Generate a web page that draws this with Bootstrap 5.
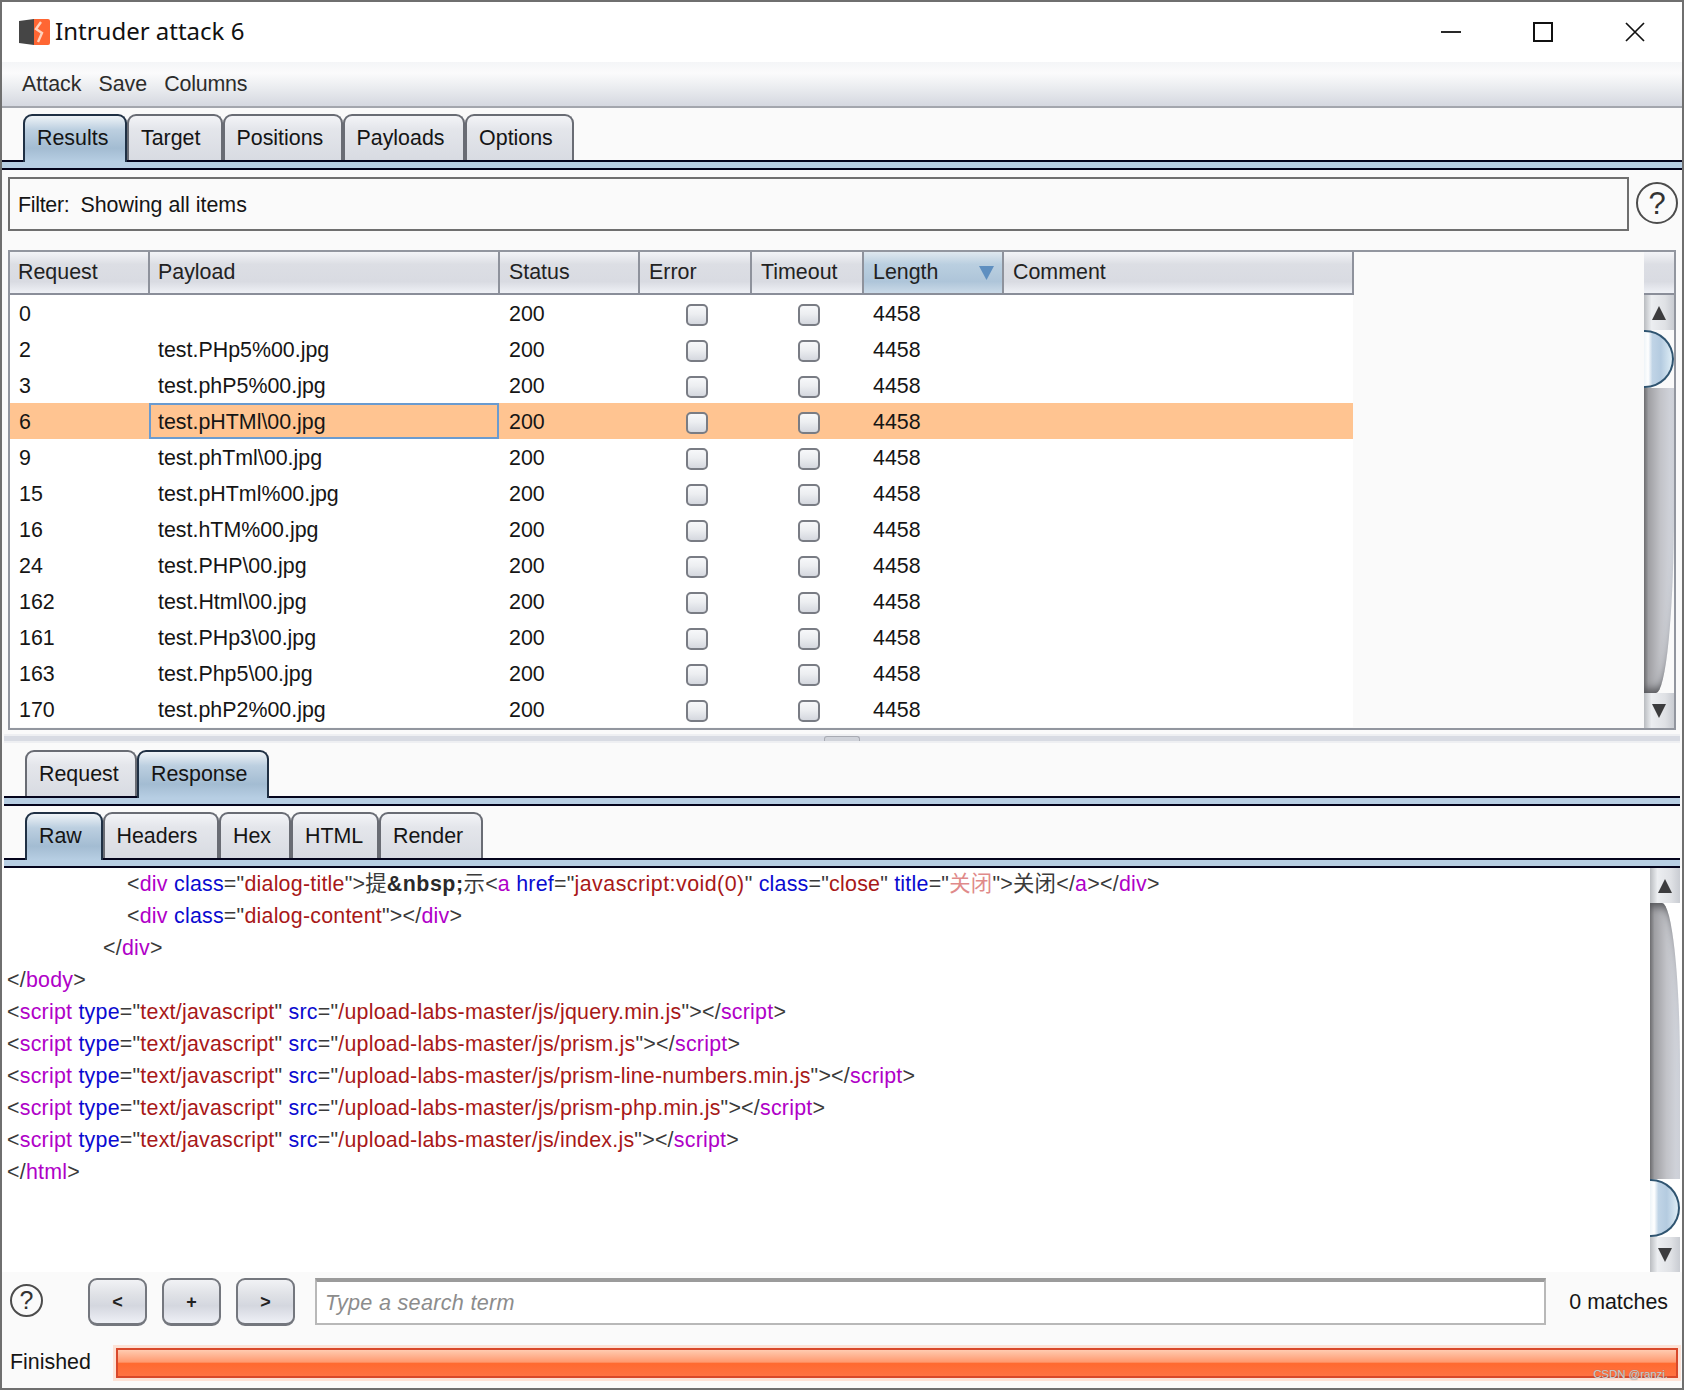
<!DOCTYPE html>
<html lang="en">
<head>
<meta charset="utf-8">
<title>Intruder attack 6</title>
<link href="https://cdn.jsdelivr.net/npm/bootstrap@5.3.0/dist/css/bootstrap.min.css" rel="stylesheet">
<style>
html,body{height:1390px;overflow:hidden;background:#fafafa}
body{font-family:"Liberation Sans",Arial,"Noto Sans CJK SC",sans-serif;font-size:21.4px;color:#151515;line-height:1.2}
.win{height:1390px;border:2px solid #6f6f6f;background:#fafafa;position:relative}
.titlebar{height:60px;background:#fff}
.app-logo{margin-left:16px;width:32px;height:28px}
.app-title{font-family:"Noto Sans","Liberation Sans",sans-serif;font-size:24px;color:#111;margin-left:5px;padding-bottom:2px}
.winctl-set{margin-right:1px}
.winctl{width:92px;height:60px}
.menubar{height:46px;padding:2px 0 0 20px;gap:17px;background:linear-gradient(#f4f5f7 0,#fbfbfc 25%,#eceef1 55%,#d5d8e0 100%);border-bottom:2px solid #a3a6ad;color:#2c2c2c}
.menu-last{letter-spacing:-.2px}
.tabset{height:46px;border:0;flex-wrap:nowrap}
.tabset-top{margin-top:6px;padding-left:21px}
.tabset-a{margin-top:7px;padding-left:23px}
.tabset-b{margin-top:6px;padding-left:23px}
.tabset .nav-link{height:46px;padding:8px 0 0 12px;margin:0;color:#151515;font-size:21.4px;line-height:28px;
 border:2px solid #696c74;border-bottom:0;border-radius:9px 9px 0 0;background:linear-gradient(#f3f4f7 0,#e4e6eb 30%,#d8dbe2 100%)}
.tabset .nav-link.active{position:relative;z-index:2;height:48px;margin-bottom:-2px;color:#151515;border-color:#1f3044;
 background:linear-gradient(#eef3f7 0,#bccfe0 30%,#a3bcd2 70%,#b7cee3 100%)}
.tw-104{width:104px}.tw-95{width:95.5px}.tw-120{width:120px}.tw-123{width:122.6px}.tw-108{width:108.5px}
.tw-112{width:112px}.tw-132{width:132px}.tw-78{width:77.5px}.tw-116{width:116.5px}.tw-72{width:72px}.tw-88{width:88px}
.strip{height:10px;border-top:2px solid #04041c;border-bottom:2px solid #04041c;background:#b7cee3}
.pane-in{margin-left:2px;margin-right:2px}
.filter-row{margin-top:7px;padding:0 4px 0 6px;gap:7px;height:54px}
.filter-box{height:54px;border:2px solid #6f6f6f;background:#fafafa;padding:3px 0 0 8px}
.filter-lbl{margin-right:11px;letter-spacing:-.3px}
.helpq{border:2px solid #4c4c4c;border-radius:50%;font-family:"Liberation Sans",sans-serif;color:#333;font-weight:400;line-height:1}
.helpq-l{width:42px;height:42px;font-size:31px;margin-bottom:2px}
.helpq-s{width:33px;height:33px;font-size:25px;margin-top:6px}
.frame{margin:19px 6px 0 6px;height:480px;border:2px solid #92969f;background:#fafafa}
.tbl-wrap{width:1343px}
.res-tbl{--bs-table-bg:#fff;--bs-table-color:#151515;table-layout:fixed;width:1343px;margin:0;font-size:21.4px}
.res-tbl th{height:42px;padding:0 0 0 8px;font-weight:400;vertical-align:middle;border:0;border-right:2px solid #8e929c;border-bottom:2px solid #8a8e99;color:#222;
 background:linear-gradient(#f3f4f7 0,#dcdee4 30%,#d9dbe2 72%,#eff1f6 100%)}
.res-tbl th.th-sorted{background:linear-gradient(#dfe8ef 0,#bacfe0 30%,#aec5d9 72%,#cadae8 100%)}
.res-tbl td{height:36px;padding:2px 0 0 9px;border:0;vertical-align:middle;line-height:34px}
.res-tbl th:nth-child(n+3),.res-tbl td:nth-child(n+3){padding-left:9px}
.res-tbl td:nth-child(3),.res-tbl td:nth-child(6){padding-left:10px}
.res-tbl tr.row-sel td{background-color:#ffc491}
.res-tbl td.cell-sel{box-shadow:inset 0 0 0 2px #6a9bd0}
.res-tbl td.cell-chk{padding:2px 0 0 4px;text-align:center}
.res-tbl .form-check-input{width:22px;height:22px;margin:0;vertical-align:middle;border:2px solid #797c84;border-radius:5px;background:linear-gradient(#f7f8fa 0,#eceef1 45%,#d5d8df 100%)}
.sort-arrow{width:15px;height:14px}
.bar-col{width:30px}
.bar-head{height:43px;background:linear-gradient(#f3f4f7 0,#dcdee4 30%,#d9dbe2 72%,#eff1f6 100%);border-bottom:2px solid #8a8e99}
.sb-btn{height:35px;background:linear-gradient(90deg,#b9bcc0 0,#eceef1 25%,#dfe1e5 70%,#c9ccd2 100%)}
.sb-btn svg{width:14px;height:14px}
.sb-thumb{height:58px;border:2px solid #2f5470;border-left:0;border-radius:0 30px 30px 0;background:linear-gradient(90deg,#eef4f8 0,#fff 15%,#c0d4e6 30%,#b4cbe0 60%,#deedf6 100%)}
.sb-track{background:linear-gradient(90deg,#6f6f72 0,#9f9fa3 15%,#c2c3c8 55%,#d5d8e0 100%)}
.sb-end{border-radius:0 0 60% 0;box-shadow:inset 0 -10px 8px -6px #55565a}
.sb-start{border-radius:0 60% 0 0;box-shadow:inset 0 10px 8px -6px #55565a}
.splitter{margin:4px 0 0 2px;height:9px;background:#d8dbe3;border-top:2px solid #eeeff2;border-bottom:2px solid #eeeff2;width:1676px;position:relative}
.split-grip{position:absolute;left:820px;top:0;width:36px;height:5px;background:#d0d3da;border:1px solid #a8abb3;border-bottom:0;border-radius:3px 3px 0 0}
.codebox{height:404px;background:#fff}
.code-main{width:1648px;overflow:hidden}
.code-line{height:32px;line-height:32px;white-space:pre;padding-left:5px;color:#3a3a3a;font-size:21.4px;letter-spacing:.23px}
.ind-20{padding-left:125px}
.ind-16{padding-left:101px}
.c-t{color:#b000c8}
.c-a{color:#0a0ad0}
.c-v{color:#a81818}
.c-js{letter-spacing:.47px}
.c-w{color:#e08a8a}
.c-b{font-weight:700;color:#2a2a2a;letter-spacing:.5px}
.search-row{height:68px;padding:6px 14px 0 8px}
.nav-btn{width:59px;height:48px;margin-left:15px;padding:0;border:2px solid #74777e;border-bottom-width:3px;border-radius:9px;font-size:18px;font-weight:700;color:#222;line-height:1;background:linear-gradient(#f1f2f5 0,#dfe1e6 35%,#d4d7df 60%,#eef0f6 100%)}
.nav-btn-first{margin-left:45px}
.search-in.form-control{height:47px;margin:0 23px 0 20px;padding:0 0 0 8px;border:2px solid #b8b8b8;border-top:4px solid #9b9b9b;border-radius:0;background:#fff;font-size:21.6px;font-family:"Liberation Sans",sans-serif}
.search-in.form-control::placeholder{color:#8c8c8c;font-style:italic;letter-spacing:.3px;opacity:1}
.match-txt{line-height:47px;padding-top:1px;white-space:nowrap}
.status-row{height:48px;padding:0 4px 2px 8px}
.prog-x{height:30px;margin-left:25px;border:2px solid #d8482a;border-radius:0;box-shadow:0 0 0 3px #fde2d6;background:#ff6a30}
.prog-x .progress-bar{background:linear-gradient(#ffcbb0 0,#ff9a70 46%,#ff6a30 52%,#ff7242 100%)}
.wm{position:absolute;right:14px;bottom:8px;font-size:11.4px;color:#cfcfcf;text-shadow:0 0 1px #777;line-height:1}
</style>
</head>
<body>
<div class="win d-flex flex-column">

  <div class="titlebar d-flex align-items-center">
    <svg class="app-logo" viewBox="0 0 32 28" aria-hidden="true">
      <path d="M1 3 L16 1 V27 L1 25 Z" fill="#454545"/>
      <path d="M16 1 H30 Q32 1 32 3 V25 Q32 27 30 27 H16 Z" fill="#ff6633"/>
      <path d="M23 4 L18 11 L24 15 L20 24" fill="none" stroke="#ffd2bd" stroke-width="2.4"/>
    </svg>
    <div class="app-title">Intruder attack 6</div>
    <div class="ms-auto d-flex winctl-set">
      <div class="winctl d-flex align-items-center justify-content-center"><svg width="20" height="20" viewBox="0 0 20 20"><path d="M0 10H20" stroke="#111" stroke-width="1.8"/></svg></div>
      <div class="winctl d-flex align-items-center justify-content-center"><svg width="20" height="20" viewBox="0 0 20 20"><rect x="1" y="1" width="18" height="18" fill="none" stroke="#111" stroke-width="2"/></svg></div>
      <div class="winctl d-flex align-items-center justify-content-center"><svg width="20" height="20" viewBox="0 0 20 20"><path d="M1 1L19 19M19 1L1 19" stroke="#111" stroke-width="1.7"/></svg></div>
    </div>
  </div>

  <div class="menubar d-flex align-items-center">
    <span>Attack</span><span>Save</span><span class="menu-last">Columns</span>
  </div>

  <ul class="nav nav-tabs tabset tabset-top">
    <li class="nav-item"><a class="nav-link active tw-104">Results</a></li>
    <li class="nav-item"><a class="nav-link tw-95">Target</a></li>
    <li class="nav-item"><a class="nav-link tw-120">Positions</a></li>
    <li class="nav-item"><a class="nav-link tw-123">Payloads</a></li>
    <li class="nav-item"><a class="nav-link tw-108">Options</a></li>
  </ul>
  <div class="strip"></div>

  <div class="filter-row d-flex align-items-center">
    <div class="filter-box flex-grow-1 d-flex align-items-center"><span class="filter-lbl">Filter:</span><span>Showing all items</span></div>
    <div class="helpq helpq-l d-flex align-items-center justify-content-center">?</div>
  </div>

  <div class="frame d-flex">
    <div class="tbl-wrap">
      <table class="table res-tbl">
        <colgroup><col style="width:139px"><col style="width:350px"><col style="width:140px"><col style="width:112px"><col style="width:112px"><col style="width:140px"><col style="width:350px"></colgroup>
        <thead><tr>
          <th>Request</th><th>Payload</th><th>Status</th><th>Error</th><th>Timeout</th>
          <th class="th-sorted"><div class="d-flex align-items-center justify-content-between pe-2">Length<svg class="sort-arrow" viewBox="0 0 15 14"><path d="M0 0H15L7.5 14Z" fill="#5f8fc0"/></svg></div></th>
          <th>Comment</th>
        </tr></thead>
        <tbody>
          <tr><td>0</td><td></td><td>200</td><td class="cell-chk"><input class="form-check-input" type="checkbox"></td><td class="cell-chk"><input class="form-check-input" type="checkbox"></td><td>4458</td><td></td></tr>
          <tr><td>2</td><td>test.PHp5%00.jpg</td><td>200</td><td class="cell-chk"><input class="form-check-input" type="checkbox"></td><td class="cell-chk"><input class="form-check-input" type="checkbox"></td><td>4458</td><td></td></tr>
          <tr><td>3</td><td>test.phP5%00.jpg</td><td>200</td><td class="cell-chk"><input class="form-check-input" type="checkbox"></td><td class="cell-chk"><input class="form-check-input" type="checkbox"></td><td>4458</td><td></td></tr>
          <tr class="row-sel"><td>6</td><td class="cell-sel">test.pHTMl\00.jpg</td><td>200</td><td class="cell-chk"><input class="form-check-input" type="checkbox"></td><td class="cell-chk"><input class="form-check-input" type="checkbox"></td><td>4458</td><td></td></tr>
          <tr><td>9</td><td>test.phTml\00.jpg</td><td>200</td><td class="cell-chk"><input class="form-check-input" type="checkbox"></td><td class="cell-chk"><input class="form-check-input" type="checkbox"></td><td>4458</td><td></td></tr>
          <tr><td>15</td><td>test.pHTml%00.jpg</td><td>200</td><td class="cell-chk"><input class="form-check-input" type="checkbox"></td><td class="cell-chk"><input class="form-check-input" type="checkbox"></td><td>4458</td><td></td></tr>
          <tr><td>16</td><td>test.hTM%00.jpg</td><td>200</td><td class="cell-chk"><input class="form-check-input" type="checkbox"></td><td class="cell-chk"><input class="form-check-input" type="checkbox"></td><td>4458</td><td></td></tr>
          <tr><td>24</td><td>test.PHP\00.jpg</td><td>200</td><td class="cell-chk"><input class="form-check-input" type="checkbox"></td><td class="cell-chk"><input class="form-check-input" type="checkbox"></td><td>4458</td><td></td></tr>
          <tr><td>162</td><td>test.Html\00.jpg</td><td>200</td><td class="cell-chk"><input class="form-check-input" type="checkbox"></td><td class="cell-chk"><input class="form-check-input" type="checkbox"></td><td>4458</td><td></td></tr>
          <tr><td>161</td><td>test.PHp3\00.jpg</td><td>200</td><td class="cell-chk"><input class="form-check-input" type="checkbox"></td><td class="cell-chk"><input class="form-check-input" type="checkbox"></td><td>4458</td><td></td></tr>
          <tr><td>163</td><td>test.Php5\00.jpg</td><td>200</td><td class="cell-chk"><input class="form-check-input" type="checkbox"></td><td class="cell-chk"><input class="form-check-input" type="checkbox"></td><td>4458</td><td></td></tr>
          <tr><td>170</td><td>test.phP2%00.jpg</td><td>200</td><td class="cell-chk"><input class="form-check-input" type="checkbox"></td><td class="cell-chk"><input class="form-check-input" type="checkbox"></td><td>4458</td><td></td></tr>
        </tbody>
      </table>
    </div>
    <div class="ms-auto bar-col d-flex flex-column">
      <div class="bar-head"></div>
      <div class="sb-btn d-flex align-items-center justify-content-center"><svg viewBox="0 0 14 14"><path d="M7 0L14 14H0Z" fill="#3c3c3e"/></svg></div>
      <div class="sb-thumb"></div>
      <div class="sb-track sb-end flex-grow-1"></div>
      <div class="sb-btn d-flex align-items-center justify-content-center"><svg viewBox="0 0 14 14"><path d="M0 0H14L7 14Z" fill="#3c3c3e"/></svg></div>
    </div>
  </div>

  <div class="splitter"><div class="split-grip"></div></div>

  <ul class="nav nav-tabs tabset tabset-a">
    <li class="nav-item"><a class="nav-link tw-112">Request</a></li>
    <li class="nav-item"><a class="nav-link active tw-132">Response</a></li>
  </ul>
  <div class="strip pane-in"></div>

  <ul class="nav nav-tabs tabset tabset-b">
    <li class="nav-item"><a class="nav-link active tw-78">Raw</a></li>
    <li class="nav-item"><a class="nav-link tw-116">Headers</a></li>
    <li class="nav-item"><a class="nav-link tw-72">Hex</a></li>
    <li class="nav-item"><a class="nav-link tw-88">HTML</a></li>
    <li class="nav-item"><a class="nav-link tw-104">Render</a></li>
  </ul>
  <div class="strip pane-in"></div>

  <div class="codebox d-flex">
    <div class="code-main">
<div class="code-line ind-20">&lt;<span class="c-t">div</span> <span class="c-a">class</span>="<span class="c-v">dialog-title</span>"&gt;提<span class="c-b">&amp;nbsp;</span>示&lt;<span class="c-t">a</span> <span class="c-a">href</span>="<span class="c-v c-js">javascript:void(0)</span>" <span class="c-a">class</span>="<span class="c-v">close</span>" <span class="c-a">title</span>="<span class="c-w">关闭</span>"&gt;关闭&lt;/<span class="c-t">a</span>&gt;&lt;/<span class="c-t">div</span>&gt;</div>
<div class="code-line ind-20">&lt;<span class="c-t">div</span> <span class="c-a">class</span>="<span class="c-v">dialog-content</span>"&gt;&lt;/<span class="c-t">div</span>&gt;</div>
<div class="code-line ind-16">&lt;/<span class="c-t">div</span>&gt;</div>
<div class="code-line">&lt;/<span class="c-t">body</span>&gt;</div>
<div class="code-line">&lt;<span class="c-t">script</span> <span class="c-a">type</span>="<span class="c-v">text/javascript</span>" <span class="c-a">src</span>="<span class="c-v">/upload-labs-master/js/jquery.min.js</span>"&gt;&lt;/<span class="c-t">script</span>&gt;</div>
<div class="code-line">&lt;<span class="c-t">script</span> <span class="c-a">type</span>="<span class="c-v">text/javascript</span>" <span class="c-a">src</span>="<span class="c-v">/upload-labs-master/js/prism.js</span>"&gt;&lt;/<span class="c-t">script</span>&gt;</div>
<div class="code-line">&lt;<span class="c-t">script</span> <span class="c-a">type</span>="<span class="c-v">text/javascript</span>" <span class="c-a">src</span>="<span class="c-v">/upload-labs-master/js/prism-line-numbers.min.js</span>"&gt;&lt;/<span class="c-t">script</span>&gt;</div>
<div class="code-line">&lt;<span class="c-t">script</span> <span class="c-a">type</span>="<span class="c-v">text/javascript</span>" <span class="c-a">src</span>="<span class="c-v">/upload-labs-master/js/prism-php.min.js</span>"&gt;&lt;/<span class="c-t">script</span>&gt;</div>
<div class="code-line">&lt;<span class="c-t">script</span> <span class="c-a">type</span>="<span class="c-v">text/javascript</span>" <span class="c-a">src</span>="<span class="c-v">/upload-labs-master/js/index.js</span>"&gt;&lt;/<span class="c-t">script</span>&gt;</div>
<div class="code-line">&lt;/<span class="c-t">html</span>&gt;</div>
    </div>
    <div class="bar-col d-flex flex-column">
      <div class="sb-btn d-flex align-items-center justify-content-center"><svg viewBox="0 0 14 14"><path d="M7 0L14 14H0Z" fill="#3c3c3e"/></svg></div>
      <div class="sb-track sb-start flex-grow-1"></div>
      <div class="sb-thumb"></div>
      <div class="sb-btn d-flex align-items-center justify-content-center"><svg viewBox="0 0 14 14"><path d="M0 0H14L7 14Z" fill="#3c3c3e"/></svg></div>
    </div>
  </div>

  <div class="search-row d-flex align-items-start">
    <div class="helpq helpq-s d-flex align-items-center justify-content-center">?</div>
    <button class="btn nav-btn nav-btn-first" type="button">&lt;</button>
    <button class="btn nav-btn" type="button">+</button>
    <button class="btn nav-btn" type="button">&gt;</button>
    <input class="form-control search-in flex-grow-1 w-auto" type="text" placeholder="Type a search term">
    <span class="match-txt">0 matches</span>
  </div>

  <div class="status-row d-flex align-items-center">
    <span>Finished</span>
    <div class="progress prog-x flex-grow-1"><div class="progress-bar w-100"></div></div>
  </div>

  <div class="wm">CSDN @ranzi.</div>
</div>
<script src="https://cdn.jsdelivr.net/npm/bootstrap@5.3.0/dist/js/bootstrap.bundle.min.js"></script>
</body>
</html>
